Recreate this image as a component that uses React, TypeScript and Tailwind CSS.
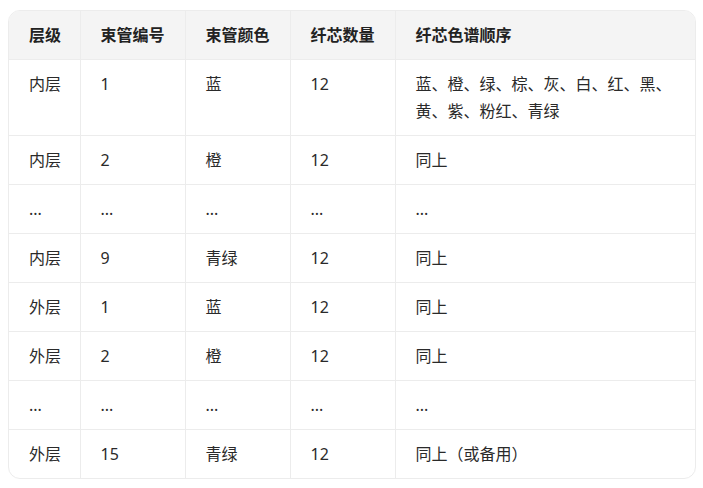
const HEAD = ["层级", "束管编号", "束管颜色", "纤芯数量", "纤芯色谱顺序"];

const ROWS: string[][] = [
  ["内层", "1", "蓝", "12", "蓝、橙、绿、棕、灰、白、红、黑、黄、紫、粉红、青绿"],
  ["内层", "2", "橙", "12", "同上"],
  ["...", "...", "...", "...", "..."],
  ["内层", "9", "青绿", "12", "同上"],
  ["外层", "1", "蓝", "12", "同上"],
  ["外层", "2", "橙", "12", "同上"],
  ["...", "...", "...", "...", "..."],
  ["外层", "15", "青绿", "12", "同上（或备用）"],
];

export default function App() {
  return (
    <div
      className="bg-white pl-2 pt-[10px]"
      style={{ fontFamily: '"Noto Sans", "Noto Sans CJK SC", sans-serif' }}
    >
      <div className="w-[688px] overflow-hidden rounded-xl border border-[#ececec]">
        <table className="w-full table-fixed border-collapse text-[16px] leading-[27px]">
          <colgroup>
            <col className="w-[71px]" />
            <col className="w-[105px]" />
            <col className="w-[105px]" />
            <col className="w-[105px]" />
            <col />
          </colgroup>
          <thead>
            <tr className="bg-[#f4f4f4]">
              {HEAD.map((h, i) => (
                <th
                  key={h}
                  className={`whitespace-nowrap px-5 py-[10.5px] text-left font-bold text-[#222] border-b border-[#ececec] ${
                    i < HEAD.length - 1 ? "border-r" : ""
                  }`}
                >
                  {h}
                </th>
              ))}
            </tr>
          </thead>
          <tbody>
            {ROWS.map((row, r) => (
              <tr key={r}>
                {row.map((c, i) => (
                  <td
                    key={i}
                    className={`px-5 py-[10.5px] align-top text-[#2a2a2a] border-[#ececec] ${
                      i < row.length - 1 ? "border-r whitespace-nowrap" : ""
                    } ${r < ROWS.length - 1 ? "border-b" : ""}`}
                  >
                    {c}
                  </td>
                ))}
              </tr>
            ))}
          </tbody>
        </table>
      </div>
    </div>
  );
}
